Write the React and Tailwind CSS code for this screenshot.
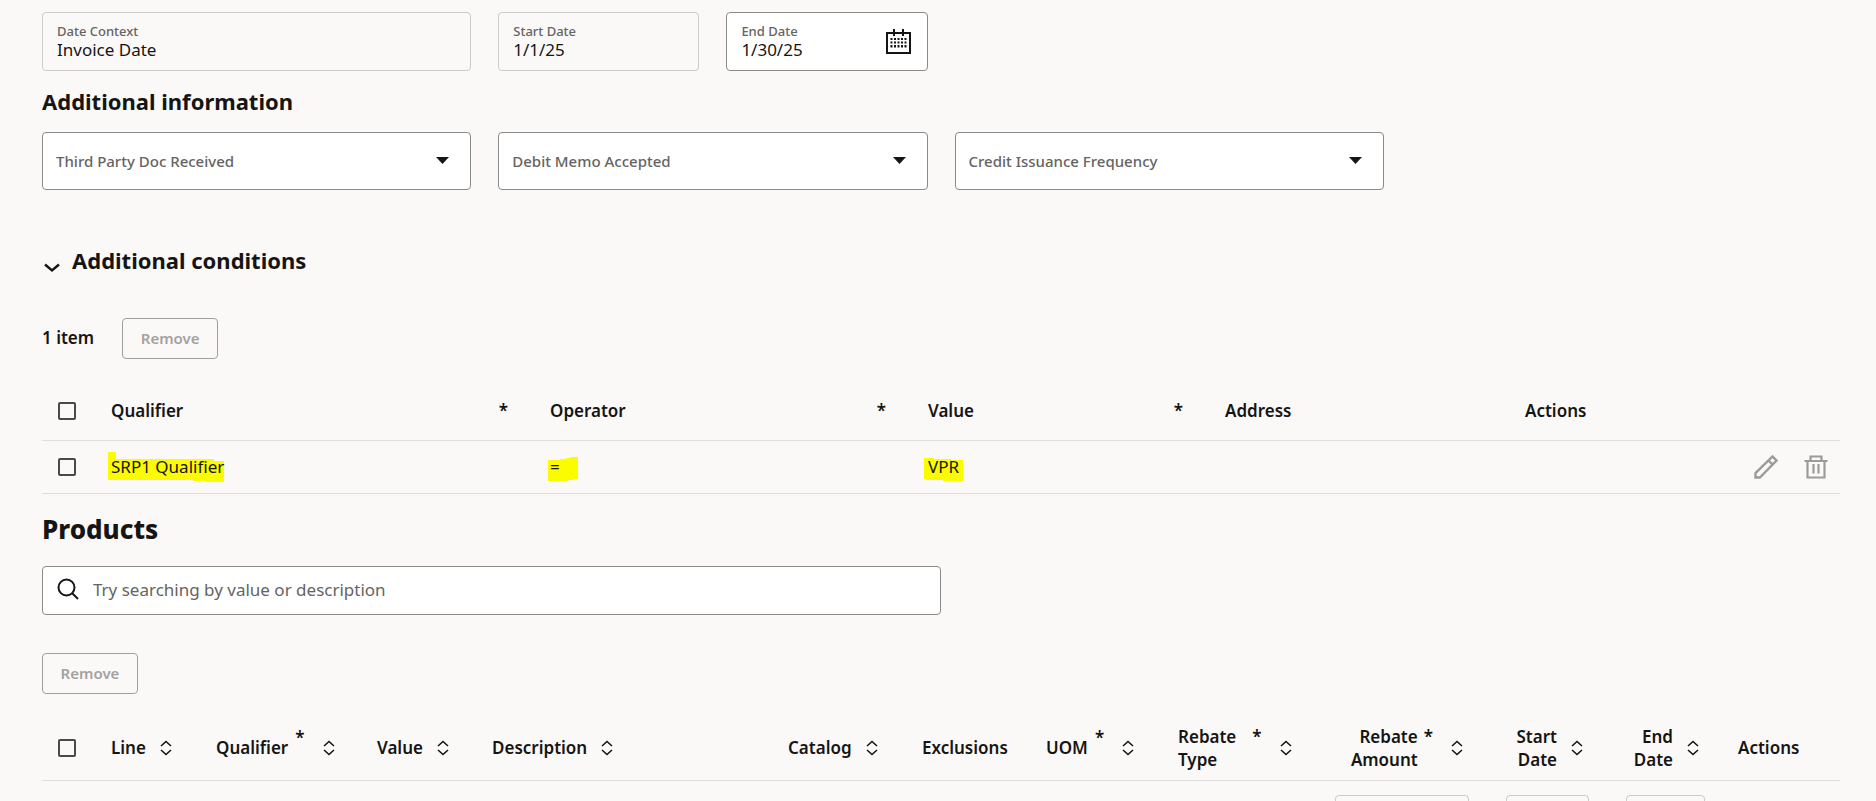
import React, { useState } from 'react';

const CalendarIcon = () => (
    <svg width="26" height="26" viewBox="0 0 26 26" className="text-[#161513]" fill="currentColor">
        <path fillRule="evenodd" d="M0 3h25v22H0V3zM2 5v18h21V5H2z" />
        <path d="M7 0h2v7H7zM16 0h2v7h-2z" />
        <path d="M4.500 9h2v2h-2zM8 9h2v2H8zM11.500 9h2v2h-2zM15 9h2v2h-2zM18.500 9h2v2h-2zM4.500 12.500h2v2h-2zM8 12.500h2v2H8zM11.500 12.500h2v2h-2zM15 12.500h2v2h-2zM18.500 12.500h2v2h-2zM4.500 16h2v2.500h-2zM8 16h2v2.500H8zM11.500 16h2v2.500h-2zM15 16h2v2.500h-2zM18.500 16h2v2.500h-2z" />
    </svg>
);

const SortIcon = () => (
    <svg width="12" height="16" viewBox="0 0 12 16" fill="none" stroke="#161513" strokeWidth="1.6">
        <path d="M1 6l5-4.5L11 6M1 10l5 4.5L11 10" />
    </svg>
);

const PencilIcon = () => (
    <svg width="24" height="24" viewBox="0 0 24 24" fill="none" stroke="#9c9b99" strokeWidth="2.4">
        <path d="M1.5 22.5v-4.4L18.5 1.5l4 4L5.9 22.5H1.5zM14.5 5.5l4 4" />
    </svg>
);

const TrashIcon = () => (
    <svg width="24" height="24" viewBox="0 0 24 24" fill="none" stroke="#9c9b99" strokeWidth="2.2">
        <path d="M0.5 6h23M6.5 6V1.5h11V6M3.5 6v16.500h17V6M9.500 9v9.500M14.500 9v9.500" />
    </svg>
);

const SearchIcon = () => (
    <svg width="22" height="22" viewBox="0 0 22 22" fill="none" stroke="#161513" strokeWidth="2">
        <circle cx="9.5" cy="9.5" r="8" />
        <path d="M15 15l6 6" />
    </svg>
);

const Checkbox = ({ label }) => (
    <input
        type="checkbox"
        aria-label={label}
        className="block appearance-none w-[18px] h-[18px] border-2 border-[#4a4947] rounded-xs checked:bg-[#3a3937]"
    />
);

const RemoveButton = () => (
    <button type="button" disabled className="w-24 h-[41px] border border-[#a09f9d] rounded text-[15px] font-semibold text-[#a3a2a0]">
        Remove
    </button>
);

const Field = ({ id, label, value, onChange, children }) => (
    <div className={onChange ? 'flex items-center h-[59px] pl-[14px] pr-[15px] rounded border border-[#8b8a88] bg-white' : 'flex items-center h-[59px] px-[14px] rounded border border-[#cbcac8]'}>
        <div className="flex-1 min-w-0">
            <label htmlFor={id} className="block text-[13px] leading-4 font-medium text-[#656462]">{label}</label>
            <input
                id={id}
                type="text"
                value={value}
                readOnly={!onChange}
                onChange={onChange}
                className="block w-full h-[22px] text-[17px] leading-[22px] bg-transparent outline-none"
            />
        </div>
        {children}
    </div>
);

const SelectField = ({ label }) => (
    <div className="relative">
        <select
            aria-label={label}
            defaultValue=""
            className="block w-full h-[58px] pl-[13px] pr-12 appearance-none rounded border border-[#8b8a88] bg-white text-[15px] font-medium text-[#656462]"
        >
            <option value="">{label}</option>
        </select>
        <svg width="13" height="7" viewBox="0 0 13 7" className="absolute right-[22px] top-[25px] pointer-events-none" fill="#161513">
            <path d="M0 0h13L6.5 7z" />
        </svg>
    </div>
);

// Marker strokes sit behind the cell text
const Marked = ({ text, width, points }) => (
    <span className="relative inline-block">
        <svg width={width} height="32" className="absolute -left-[4px] -top-[4px]" fill="#fcfc00">
            <polygon points={points} />
        </svg>
        <span className="relative">{text}</span>
    </span>
);

const conditionColumns = [
    { name: 'Qualifier', required: true },
    { name: 'Operator', required: true },
    { name: 'Value', required: true },
    { name: 'Address' },
    { name: 'Actions' },
];

const productColumns = [
    { name: 'Line', sort: true },
    { name: 'Qualifier', required: true, sort: true },
    { name: 'Value', sort: true },
    { name: 'Description', sort: true },
    { name: 'Catalog', sort: true },
    { name: 'Exclusions' },
    { name: 'UOM', required: true, sort: true },
    { name: 'Rebate Type', required: true, sort: true, wrap: true },
    { name: 'Rebate Amount', required: true, sort: true, wrap: true, end: true },
    { name: 'Start Date', sort: true, wrap: true, end: true },
    { name: 'End Date', sort: true, wrap: true, end: true },
    { name: 'Actions' },
];

const ProductHeader = ({ column }) => (
    <th className={column.end ? 'pr-[22px] font-semibold' : column.sort ? 'pl-4 font-semibold' : 'pl-[17px] font-semibold'}>
        <div className={column.end ? 'flex items-center justify-end text-right' : 'flex items-center text-left'}>
            <span className={column.wrap ? 'w-min' : 'whitespace-nowrap'}>{column.name}</span>
            {column.required && (
                <span className={column.end ? 'self-start pl-[6px] pr-1' : column.wrap ? 'self-start pl-4 pr-1' : 'pl-[7px] pr-1 pb-5'}>*</span>
            )}
            {column.sort && (
                <button type="button" aria-label={'Sort by ' + column.name} className="ml-[14px]">
                    <SortIcon />
                </button>
            )}
        </div>
    </th>
);

const App = () => {
    const [endDate, setEndDate] = useState('1/30/25');
    const [search, setSearch] = useState('');
    const [open, setOpen] = useState(true);

    return (
        <div className="h-screen overflow-hidden bg-[#fbf9f8] text-[#161513] text-[17px] leading-[23px] font-['Noto_Sans','Open_Sans',sans-serif] pt-3 pl-[42px] pr-9">
            <div className="grid grid-cols-8 gap-x-[27px]">
                <div className="col-span-2">
                    <Field id="dateContext" label="Date Context" value="Invoice Date" />
                </div>
                <Field id="startDate" label="Start Date" value="1/1/25" />
                <Field id="endDate" label="End Date" value={endDate} onChange={(e) => setEndDate(e.target.value)}>
                    <button type="button" aria-label="Select date"><CalendarIcon /></button>
                </Field>
            </div>

            <h2 className="mt-[14px] text-[22px] leading-8 font-bold">Additional information</h2>
            <div className="mt-[15px] grid grid-cols-4 gap-x-[27px]">
                <SelectField label="Third Party Doc Received" />
                <SelectField label="Debit Memo Accepted" />
                <SelectField label="Credit Issuance Frequency" />
            </div>

            <div className="mt-[54px] flex items-center gap-3">
                <button type="button" aria-label="Toggle additional conditions" onClick={() => setOpen(!open)} className="pt-4 pl-[2px]">
                    <svg width="16" height="10" viewBox="0 0 16 10" fill="none" stroke="#161513" strokeWidth="2.4">
                        <path d="M1 1.5l7 6 7-6" />
                    </svg>
                </button>
                <h2 className="text-[22px] leading-8 font-bold">Additional conditions</h2>
            </div>

            {open && (
                <>
                    <div className="mt-[42px] flex items-center gap-7">
                        <span className="pb-[2px] font-semibold">1 item</span>
                        <RemoveButton />
                    </div>
                    <table className="mt-[23px] w-full table-fixed">
                        <colgroup>
                            <col className="w-[53px]" />
                            <col className="w-[439px]" />
                            <col className="w-[378px]" />
                            <col className="w-[297px]" />
                            <col className="w-[300px]" />
                            <col className="w-[331px]" />
                        </colgroup>
                        <thead>
                            <tr className="h-[58px] border-b border-[#e0dedc]">
                                <th className="pl-4"><Checkbox label="Select all conditions" /></th>
                                {conditionColumns.map((column) => (
                                    <th key={column.name} className="pl-4 font-semibold">
                                        <div className="flex justify-between pr-[26px]">
                                            <span>{column.name}</span>
                                            {column.required && <span>*</span>}
                                        </div>
                                    </th>
                                ))}
                            </tr>
                        </thead>
                        <tbody>
                            <tr className="h-[53px] border-b border-[#e0dedc]">
                                <td className="pl-4"><Checkbox label="Select SRP1 Qualifier" /></td>
                                <td className="pl-4">
                                    <Marked text="SRP1 Qualifier" width="118" points="1,1 9,1 9,8 107,8 107,10 117,10 117,31 99,31 99,30 86,30 86,29 1,29" />
                                </td>
                                <td className="pl-4">
                                    <Marked text="=" width="34" points="2,9 14,9 14,8 20,8 20,7 24,7 24,6 32,6 32,28 28,28 28,29 22,29 22,30 2,30" />
                                </td>
                                <td className="pl-4">
                                    <Marked text="VPR" width="40" points="0,7 10,7 10,8 27,8 27,9 39,9 39,30 19,30 19,29 2,29 2,28 0,28" />
                                </td>
                                <td />
                                <td>
                                    <div className="flex justify-end gap-[26px] pr-3">
                                        <button type="button" aria-label="Edit"><PencilIcon /></button>
                                        <button type="button" aria-label="Delete"><TrashIcon /></button>
                                    </div>
                                </td>
                            </tr>
                        </tbody>
                    </table>
                </>
            )}

            <h1 className="mt-[19px] text-[26px] leading-8 font-extrabold">Products</h1>
            <div className="mt-[21px] w-1/2 h-[49px] flex items-center gap-[14px] px-[14px] pb-[2px] rounded border border-[#8b8a88] bg-white">
                <SearchIcon />
                <input
                    type="text"
                    aria-label="Search products"
                    placeholder="Try searching by value or description"
                    value={search}
                    onChange={(e) => setSearch(e.target.value)}
                    className="flex-1 bg-transparent outline-none placeholder:text-[#656462]"
                />
            </div>
            <div className="mt-[38px] flex">
                <RemoveButton />
            </div>

            <table className="mt-[22px] w-full table-fixed">
                <colgroup>
                    <col className="w-[53px]" />
                    <col className="w-[105px]" />
                    <col className="w-[161px]" />
                    <col className="w-[115px]" />
                    <col className="w-[296px]" />
                    <col className="w-[133px]" />
                    <col className="w-[125px]" />
                    <col className="w-[132px]" />
                    <col className="w-[146px]" />
                    <col className="w-[177px]" />
                    <col className="w-[120px]" />
                    <col className="w-[116px]" />
                    <col className="w-[119px]" />
                </colgroup>
                <thead>
                    <tr className="h-[65px] border-b border-[#e0dedc]">
                        <th className="pl-4"><Checkbox label="Select all products" /></th>
                        {productColumns.map((column) => (
                            <ProductHeader key={column.name} column={column} />
                        ))}
                    </tr>
                </thead>
                <tbody>
                    <tr>
                        <td colSpan={9} />
                        <td className="pt-[14px] pl-[27px] pr-4">
                            <input type="text" readOnly aria-label="Rebate Amount" className="block w-full h-[41px] rounded border border-[#cbcac8]" />
                        </td>
                        <td className="pt-[14px] pl-[21px] pr-4">
                            <input type="text" readOnly aria-label="Start Date" className="block w-full h-[41px] rounded border border-[#cbcac8]" />
                        </td>
                        <td className="pt-[14px] pl-[21px] pr-4">
                            <input type="text" readOnly aria-label="End Date" className="block w-full h-[41px] rounded border border-[#cbcac8]" />
                        </td>
                        <td />
                    </tr>
                </tbody>
            </table>
        </div>
    );
};

export default App;
